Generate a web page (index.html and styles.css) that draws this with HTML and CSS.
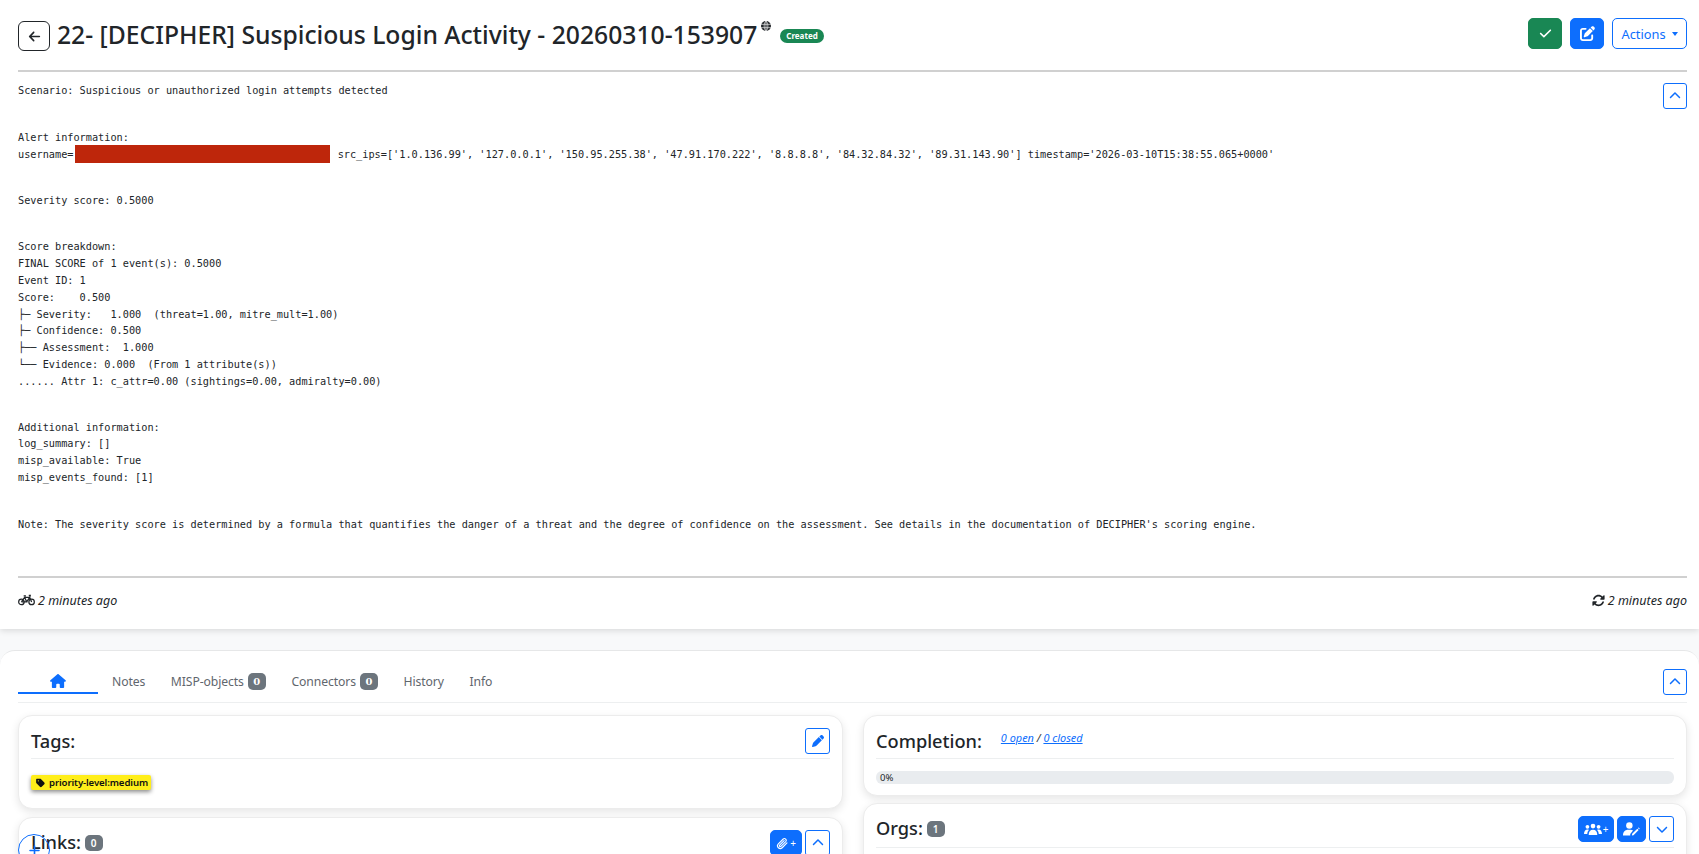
FILE: index.html
```html
<!DOCTYPE html>
<html lang="en">
<head>
<meta charset="utf-8">
<title>Case 22</title>
<link rel="stylesheet" href="styles.css">
</head>
<body>
<section class="summary">
  <header class="head">
    <div class="head-left">
      <button class="btn-back"><svg class="i" viewBox="0 0 448 512"><path d="M9.4 233.4c-12.5 12.5-12.5 32.8 0 45.3l160 160c12.5 12.5 32.8 12.5 45.3 0s12.5-32.8 0-45.3L109.2 288 416 288c17.7 0 32-14.3 32-32s-14.3-32-32-32l-306.7 0L214.6 118.6c12.5-12.5 12.5-32.8 0-45.3s-32.8-12.5-45.3 0l-160 160z"/></svg></button>
      <h1 class="title">22- [DECIPHER] Suspicious Login Activity - 20260310-153907</h1>
      <svg class="globe" viewBox="0 0 16 16"><circle cx="8" cy="8" r="8"/><path d="M0 5.3h16M0 10.7h16M8 0v16M8 0C4 4 4 12 8 16M8 0c4 4 4 12 0 16" fill="none" stroke="#fff" stroke-width="1"/></svg>
      <span class="pill">Created</span>
    </div>
    <div class="head-right">
      <button class="btn solid green w34"><svg class="i" viewBox="0 0 448 512"><path d="M438.6 105.4c12.5 12.5 12.5 32.8 0 45.3l-256 256c-12.5 12.5-32.8 12.5-45.3 0l-128-128c-12.5-12.5-12.5-32.8 0-45.3s32.8-12.5 45.3 0L160 338.7 393.4 105.4c12.5-12.5 32.8-12.5 45.3 0z"/></svg></button>
      <button class="btn solid w34"><svg class="i i14" viewBox="0 0 512 512"><path d="M471.6 21.7c-21.9-21.9-57.3-21.9-79.2 0L362.3 51.7l97.9 97.9 30.1-30.1c21.9-21.9 21.9-57.3 0-79.2L471.6 21.7zm-299.2 220c-6.1 6.1-10.8 13.6-13.5 21.9l-29.6 88.8c-2.9 8.6-.6 18.1 5.8 24.6s15.9 8.7 24.6 5.8l88.8-29.6c8.2-2.7 15.7-7.4 21.9-13.5L437.7 172.3 339.7 74.3 172.4 241.7zM96 64C43 64 0 107 0 160V416c0 53 43 96 96 96H352c53 0 96-43 96-96V320c0-17.7-14.3-32-32-32s-32 14.3-32 32v96c0 17.7-14.3 32-32 32H96c-17.7 0-32-14.3-32-32V160c0-17.7 14.3-32 32-32h96c17.7 0 32-14.3 32-32s-14.3-32-32-32H96z"/></svg></button>
      <button class="btn outline actions">Actions<span class="caret"></span></button>
    </div>
  </header>
  <hr class="rule">
  <div class="desc">
    <div class="desc-text">
<pre class="para">Scenario: Suspicious or unauthorized login attempts detected</pre>
<pre class="para gap-first">Alert information:
username=<span class="redact"></span> src_ips=['1.0.136.99', '127.0.0.1', '150.95.255.38', '47.91.170.222', '8.8.8.8', '84.32.84.32', '89.31.143.90'] timestamp='2026-03-10T15:38:55.065+0000'</pre>
<pre class="para">Severity score: 0.5000</pre>
<pre class="para gap-large">Score breakdown:
FINAL SCORE of 1 event(s): 0.5000
Event ID: 1
Score:    0.500
├─ Severity:   1.000  (threat=1.00, mitre_mult=1.00)
├─ Confidence: 0.500
├── Assessment:  1.000
└── Evidence: 0.000  (From 1 attribute(s))
...... Attr 1: c_attr=0.00 (sightings=0.00, admiralty=0.00)</pre>
<pre class="para">Additional information:
log_summary: []
misp_available: True
misp_events_found: [1]</pre>
<pre class="para gap-large">Note: The severity score is determined by a formula that quantifies the danger of a threat and the degree of confidence on the assessment. See details in the documentation of DECIPHER's scoring engine.</pre>
    </div>
    <button class="btn outline tiny"><svg class="i i12" viewBox="0 0 512 512"><path d="M233.4 105.4c12.5-12.5 32.8-12.5 45.3 0l192 192c12.5 12.5 12.5 32.8 0 45.3s-32.8 12.5-45.3 0L256 173.3 86.6 342.6c-12.5 12.5-32.8 12.5-45.3 0s-12.5-32.8 0-45.3l192-192z"/></svg></button>
  </div>
  <hr class="rule">
  <footer class="meta">
    <span class="when"><svg class="i bike" viewBox="0 0 18 12"><circle cx="3.6" cy="8" r="2.9"/><circle cx="14.4" cy="8" r="2.9"/><path d="M3.6 8 7 3.2h5.4L14.4 8M7 3.2 9.2 8h-5.6M12.4 3.2 9.2 8M6 1.6h2.4M11.4 1h1.6l-.6 2.2"/></svg>2 minutes ago</span>
    <span class="when"><svg class="i i13" viewBox="0 0 512 512"><path d="M142.9 142.9c-17.5 17.5-30.1 38-37.8 59.8c-5.9 16.7-24.2 25.4-40.8 19.5s-25.4-24.2-19.5-40.8C55.6 150.7 73.2 122 97.6 97.6c87.2-87.2 228.3-87.5 315.8-1L455 55c6.9-6.9 17.2-8.9 26.2-5.2s14.8 12.5 14.8 22.2V200c0 13.3-10.7 24-24 24H344c-9.7 0-18.5-5.8-22.2-14.8s-1.7-19.3 5.2-26.2l41.1-41.1c-62.6-61.5-163.1-61.2-225.3 1zM16 312c0-13.3 10.7-24 24-24H168c9.7 0 18.5 5.8 22.2 14.8s1.7 19.3-5.2 26.2l-41.1 41.1c62.6 61.5 163.1 61.2 225.3-1c17.5-17.5 30.1-38 37.8-59.8c5.9-16.7 24.2-25.4 40.8-19.5s25.4 24.2 19.5 40.8c-10.8 30.6-28.4 59.3-52.9 83.8c-87.2 87.2-228.3 87.5-315.8 1L57 457c-6.9 6.9-17.2 8.9-26.2 5.2S16 449.7 16 440V312z"/></svg>2 minutes ago</span>
  </footer>
</section>

<section class="detail">
  <nav class="tabs">
    <a class="tab active"><svg class="i home" viewBox="0 0 576 512"><path d="M575.8 255.5c0 18-15 32.1-32 32.1h-32l.7 160.2c0 2.7-.2 5.4-.5 8.1V472c0 22.1-17.9 40-40 40H456c-1.1 0-2.2 0-3.3-.1c-1.4 .1-2.8 .1-4.2 .1H416 392c-22.1 0-40-17.9-40-40V448 384c0-17.7-14.3-32-32-32H256c-17.7 0-32 14.3-32 32v64 24c0 22.1-17.9 40-40 40H160 128.1c-1.5 0-3-.1-4.5-.2c-1.2 .1-2.4 .2-3.6 .2H104c-22.1 0-40-17.9-40-40V360c0-.9 0-1.9 .1-2.8V287.6H32c-18 0-32-14-32-32.1c0-9 3-17 10-24L266.4 8c7-7 15-8 22-8s15 2 21 7L564.8 231.5c8 7 12 15 11 24z"/></svg></a>
    <a class="tab">Notes</a>
    <a class="tab">MISP-objects <span class="count">0</span></a>
    <a class="tab">Connectors <span class="count">0</span></a>
    <a class="tab">History</a>
    <a class="tab">Info</a>
    <button class="btn outline tiny push"><svg class="i i12" viewBox="0 0 512 512"><path d="M233.4 105.4c12.5-12.5 32.8-12.5 45.3 0l192 192c12.5 12.5 12.5 32.8 0 45.3s-32.8 12.5-45.3 0L256 173.3 86.6 342.6c-12.5 12.5-32.8 12.5-45.3 0s-12.5-32.8 0-45.3l192-192z"/></svg></button>
  </nav>
  <div class="columns">
    <div class="col">
      <article class="card card-tags">
        <div class="card-head">
          <h2 class="card-title">Tags:</h2>
          <div class="tools"><button class="btn outline tool"><svg class="i i12" viewBox="0 0 512 512"><path d="M362.7 19.3L314.3 67.7 444.3 197.7l48.4-48.4c25-25 25-65.5 0-90.5L453.3 19.3c-25-25-65.5-25-90.5 0zm-71 71L58.6 323.5c-10.4 10.4-18 23.3-22.2 37.4L1 481.2C-1.5 489.7 .8 498.8 7 505s15.3 8.5 23.7 6.1l120.3-35.4c14.1-4.2 27-11.8 37.4-22.2L421.7 220.3 291.7 90.3z"/></svg></button></div>
        </div>
        <span class="tag"><svg class="i i9" viewBox="0 0 448 512"><path d="M0 80V229.5c0 17 6.7 33.3 18.7 45.3l176 176c25 25 65.5 25 90.5 0L418.7 317.3c25-25 25-65.5 0-90.5l-176-176c-12-12-28.3-18.7-45.3-18.7H48C21.5 32 0 53.5 0 80zm112 32a32 32 0 1 1 0 64 32 32 0 1 1 0-64z"/></svg>priority-level:medium</span>
      </article>
      <article class="card card-tall">
        <div class="card-head">
          <h2 class="card-title">Links: <span class="count big">0</span></h2>
          <div class="tools">
            <button class="btn solid clip"><svg class="i clip-i" viewBox="0 0 16 16"><path d="M13.5 7.3 7.6 13.2a3.3 3.3 0 0 1-4.7-4.7l6-6a2.2 2.2 0 0 1 3.1 3.1l-6 6a1.1 1.1 0 0 1-1.5-1.6l5.5-5.5" /></svg><span class="plus">+</span></button>
            <button class="btn outline tool"><svg class="i i12" viewBox="0 0 512 512"><path d="M233.4 105.4c12.5-12.5 32.8-12.5 45.3 0l192 192c12.5 12.5 12.5 32.8 0 45.3s-32.8 12.5-45.3 0L256 173.3 86.6 342.6c-12.5 12.5-32.8 12.5-45.3 0s-12.5-32.8 0-45.3l192-192z"/></svg></button>
          </div>
        </div>
      </article>
    </div>
    <div class="col col-right">
      <article class="card card-completion">
        <div class="card-head">
          <h2 class="card-title">Completion:</h2>
          <span class="tasks"><a>0 open</a> / <a>0 closed</a></span>
        </div>
        <div class="progress">0%</div>
      </article>
      <article class="card card-tall">
        <div class="card-head">
          <h2 class="card-title">Orgs: <span class="count big">1</span></h2>
          <div class="tools">
            <button class="btn solid users"><svg class="i users-i" viewBox="0 0 20 14"><circle cx="10" cy="3.2" r="2.6"/><circle cx="3.8" cy="4" r="2.1"/><circle cx="16.2" cy="4" r="2.1"/><path d="M5.2 13c0-3.4 2-5.6 4.8-5.6s4.8 2.2 4.8 5.6zM0 12c0-3 1.500-5 3.800-5 .7 0 1.200.2 1.700.5C4.300 8.700 3.700 10.200 3.600 12zM20 12c0-3-1.500-5-3.800-5-.7 0-1.200.2-1.700.5 1.200 1.200 1.800 2.700 1.900 4.500z"/></svg><span class="plus">+</span></button>
            <button class="btn solid person"><svg class="i person-i" viewBox="0 0 20 16"><circle cx="7.500" cy="4" r="3.800"/><path d="M0 15.500C0 11.500 2.500 9 6 9h3c1 0 2 .2 2.800.7L8.500 14v1.500zM10.500 15.500l.3-1.800 6-6 1.600 1.600-6 6zM17.500 6.900l.8-.8 1.500 1.500-.8.800z"/></svg></button>
            <button class="btn outline tool"><svg class="i i12" viewBox="0 0 512 512"><path d="M233.4 406.6c12.5 12.5 32.8 12.5 45.3 0l192-192c12.5-12.5 12.5-32.8 0-45.3s-32.8-12.5-45.3 0L256 338.7 86.6 169.4c-12.5-12.5-32.8-12.5-45.3 0s-12.5 32.8 0 45.3l192 192z"/></svg></button>
          </div>
        </div>
      </article>
    </div>
  </div>
</section>
<button class="fab"><svg class="i i13" viewBox="0 0 448 512"><path d="M256 80c0-17.700-14.300-32-32-32s-32 14.300-32 32V224H48c-17.700 0-32 14.300-32 32s14.300 32 32 32H192V432c0 17.700 14.300 32 32 32s32-14.300 32-32V288H400c17.700 0 32-14.300 32-32s-14.300-32-32-32H256V80z"/></svg></button>
</body>
</html>
```
FILE: styles.css
```css
* { box-sizing: border-box; }
html, body { height: 100%; overflow: hidden; }
body { margin: 0; background: #f8f9fa; color: #212529; font-family: "Noto Sans", "Open Sans", sans-serif; font-size: 14px; }
button { font-family: inherit; cursor: pointer; }
.i { width: 13px; height: 13px; fill: currentColor; display: block; flex: none; }
.i9 { width: 9px; height: 10px; }
.i12 { width: 12px; height: 12px; }
.i13 { width: 13px; height: 13px; }
.i14 { width: 15px; height: 15px; }

.summary { background: #fff; height: 629px; padding: 18px 12px 0 18px; box-shadow: 0 2px 6px rgba(0,0,0,.12); }
.head { display: flex; justify-content: space-between; align-items: flex-start; height: 52px; }
.head-left { display: flex; align-items: center; margin-top: 2px; }
.btn-back { width: 32px; height: 30px; padding: 0; background: #fff; border: 1px solid #212529; border-radius: 6px; color: #212529; display: flex; align-items: center; justify-content: center; }
.title { margin: 0 0 2px 7px; font-size: 24.7px; font-weight: 500; line-height: 30px; white-space: nowrap; color: #212529; }
.globe { width: 10px; height: 10px; fill: #212529; align-self: flex-start; margin: 1px 0 0 4px; }
.pill { margin-left: 9px; background: #198754; color: #fff; font-size: 8px; font-weight: 700; line-height: 14px; padding: 0 6px; border-radius: 8px; }
.head-right { display: flex; gap: 8px; }
.btn { display: flex; align-items: center; justify-content: center; padding: 0; border-radius: 5px; font-size: 12.8px; border: 1px solid #0d6efd; }
.solid { background: #0d6efd; color: #fff; }
.green { background: #198754; border-color: #198754; }
.outline { background: #fff; color: #0d6efd; }
.w34 { width: 34px; height: 31px; }
.actions { width: 75px; height: 31px; gap: 6px; }
.caret { width: 0; height: 0; border-left: 3.500px solid transparent; border-right: 3.500px solid transparent; border-top: 4px solid currentColor; }
.rule { margin: 0; border: 0; border-top: 2px solid #d0d0d0; }

.desc { display: flex; justify-content: space-between; align-items: flex-start; height: 504px; padding-top: 10px; }
.desc > .tiny { margin-top: 1px; }
.para { margin: 29px 0 0; font-family: "DejaVu Sans Mono", "Liberation Mono", monospace; font-size: 10.24px; line-height: 16.8px; color: #212529; white-space: pre; }
.para:first-child { margin-top: 0; }
.gap-first { margin-top: 30px; }
.gap-large { margin-top: 30px; }
.redact { display: inline-block; width: 255px; height: 18px; margin: -.5px 1px -.5px 2px; background: #be260b; vertical-align: -5px; }
.tiny { width: 24px; height: 26px; border-radius: 3px; }
.meta { display: flex; justify-content: space-between; align-items: center; height: 48px; padding-bottom: 4px; }
.when { display: flex; align-items: center; gap: 3px; font-style: italic; font-size: 12.5px; color: #212529; }
.bike { width: 17px; height: 12px; fill: none; stroke: #212529; stroke-width: 1.300; }

.detail { margin-top: 21px; background: #fff; border-top: 1px solid #e6e7e8; border-radius: 15px 15px 0 0; padding: 0 12px 0 18px; height: 300px; }
.tabs { display: flex; align-items: flex-end; height: 52px; border-bottom: 1px solid #edeff0; font-size: 12.2px; letter-spacing: -.1px; color: #5f666d; }
.tab { height: 33px; display: flex; align-items: center; gap: 4px; margin-right: 25.6px; padding-bottom: 8px; white-space: nowrap; }
.tab.active { width: 80px; height: 25px; margin-right: 14px; padding-bottom: 0; margin-bottom: 8px; justify-content: center; color: #0d6efd; border-bottom: 2px solid #0d6efd; }
.home { width: 16px; height: 14px; }
.count { display: inline-flex; align-items: center; justify-content: center; width: 18px; height: 17px; background: #6c757d; color: #fff; border-radius: 5px; font-size: 10px; font-weight: 700; font-family: "DejaVu Serif", serif; }
.count.big { font-family: "Noto Sans", sans-serif; font-weight: 600; height: 16px; vertical-align: 2px; margin-left: -1px; }
.push { margin: 0 0 7px auto; }

.columns { display: grid; grid-template-columns: 825px 824px; column-gap: 20px; padding-top: 12px; align-items: start; }
.col { display: flex; flex-direction: column; gap: 8px; }
.col-right { gap: 7px; }
.card { background: #fff; border: 1px solid #ececec; border-radius: 14px; box-shadow: 0 3px 8px rgba(0,0,0,.1); padding: 0 12px; }
.card-tags { height: 94px; }
.card-completion { height: 81px; }
.card-tall { height: 120px; }
.card-head { display: flex; align-items: center; height: 43px; border-bottom: 1px solid #edeff0; padding-top: 7px; }
.card-tall .card-head { height: 44px; padding-top: 7px; }
.card-title { margin: 0; font-size: 18.200px; font-weight: 500; line-height: 24px; white-space: nowrap; }
.card-tall .card-title { margin-top: -2px; }
.tools { margin-left: auto; display: flex; gap: 3px; }
.tool { width: 25px; height: 26px; border-radius: 3px; }
.tag { display: inline-flex; align-items: center; gap: 4px; margin-top: 16px; height: 15px; padding: 0 3px 0 5px; background: #ffee1a; color: #111; border-radius: 2px; font-size: 9.6px; font-weight: 600; letter-spacing: -.1px; box-shadow: 0 2px 4px rgba(0,0,0,.45); white-space: nowrap; }
.plus { font-size: 10px; line-height: 1; margin-left: 1px; }
.clip { width: 32px; height: 26px; }
.clip-i { width: 13px; height: 13px; fill: none; stroke: #fff; stroke-width: 1.400; stroke-linecap: round; }
.users { width: 36px; height: 26px; }
.users-i { width: 18px; height: 13px; }
.person { width: 29px; height: 26px; }
.person-i { width: 17px; height: 14px; }
.tasks { margin-left: 19px; font-size: 10.900px; font-style: italic; align-self: flex-start; margin-top: 7px; color: #333; }
.tasks a { color: #0d6efd; text-decoration: underline; }
.progress { margin-top: 12px; height: 13px; background: #e9ecef; border-radius: 6px; font-size: 9.500px; line-height: 13px; padding-left: 4px; color: #212529; }
.fab { position: fixed; left: 18px; top: 834px; width: 32px; height: 32px; padding: 0; background: transparent; border: 1px solid #0d6efd; border-radius: 50%; color: #0d6efd; display: flex; align-items: center; justify-content: center; }
```
